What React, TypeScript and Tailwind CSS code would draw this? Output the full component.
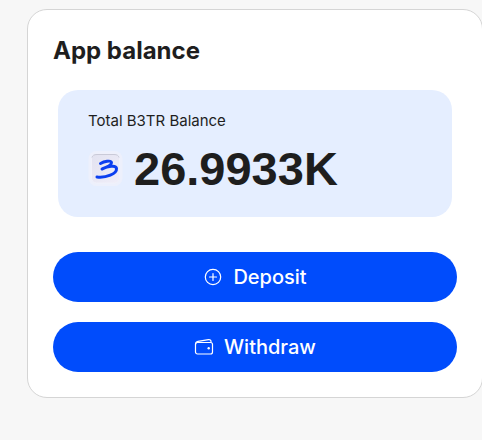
import React from "react";

function TokenIcon() {
  return (
    <svg width="36" height="36" viewBox="0 0 36 36" fill="none" aria-hidden="true" className="shrink-0">
      <defs>
        <linearGradient id="tile" x1="0" y1="0" x2="1" y2="1">
          <stop offset="0" stopColor="#e2e2f0" />
          <stop offset="1" stopColor="#f0eef9" />
        </linearGradient>
      </defs>
      <rect x="0.500" y="0" width="34" height="35" rx="8" fill="#edf0fc" />
      <rect x="3.500" y="3" width="28" height="29" rx="5" fill="url(#tile)" stroke="#f1f1fa" />
      <path d="M4 6.500C4.500 4.500 6 3.500 9 3.500H26C29 3.500 30.500 4.500 31 6.500" stroke="#c9cad8" />
      <path
        d="M12.500 12.500C16 10.500 23 9 23.500 11.500C24 14 18 16.500 14 18C19.500 15.500 28 13.500 28.500 17.500C29 23 18 27 9 26"
        stroke="#0b3ff0"
        strokeWidth="3"
        strokeLinecap="round"
        strokeLinejoin="round"
      />
    </svg>
  );
}

function PlusCircleIcon() {
  return (
    <svg width="20" height="20" viewBox="0 0 20 20" fill="none" stroke="currentColor" strokeWidth="1.200" strokeLinecap="round" aria-hidden="true">
      <circle cx="10" cy="10" r="7.700" />
      <path d="M10 6.500v7M6.500 10h7" />
    </svg>
  );
}

function WalletIcon() {
  return (
    <svg width="20" height="20" viewBox="0 0 20 20" fill="none" stroke="currentColor" strokeWidth="1.200" strokeLinejoin="round" aria-hidden="true">
      <rect x="1.500" y="5.500" width="17" height="11.500" rx="2" />
      <path d="M1.500 7.500C1.500 5.500 2 4.800 4 4.400L14.500 2.600C16 2.400 17 3 17 4.500V5.500" />
      <circle cx="14.700" cy="11.300" r="1.200" fill="currentColor" stroke="none" />
    </svg>
  );
}

function ActionButton({ icon, children }: { icon: React.ReactNode; children: React.ReactNode }) {
  return (
    <button
      type="button"
      className="flex h-[50px] w-full items-center justify-center gap-2.5 rounded-full bg-[#004cfc] text-xl font-medium text-white"
    >
      {icon}
      {children}
    </button>
  );
}

export default function App() {
  return (
    <main className="min-h-screen bg-[#f7f7f7] pt-[9px] pb-10 pl-[27px] font-['Inter',sans-serif] text-[#1e1e1e]">
      <section className="-mr-px rounded-[20px] border border-[#d5d5d5] bg-white p-[25px]">
        <h1 className="pt-px text-2xl leading-[30px] font-bold">App balance</h1>
        <div className="mx-[5px] mt-6 rounded-[20px] bg-[#e5eeff] px-[30px] py-5">
          <p className="text-[15px] leading-[22px]">Total B3TR Balance</p>
          <div className="mt-[9px] flex items-center gap-2.5">
            <TokenIcon />
            <span className="font-['Liberation_Sans',Arial,sans-serif] text-[47px] leading-[56px] font-bold">26.9933K</span>
          </div>
        </div>
        <div className="mt-[35px] flex flex-col gap-5">
          <ActionButton icon={<PlusCircleIcon />}>Deposit</ActionButton>
          <ActionButton icon={<WalletIcon />}>Withdraw</ActionButton>
        </div>
      </section>
    </main>
  );
}
